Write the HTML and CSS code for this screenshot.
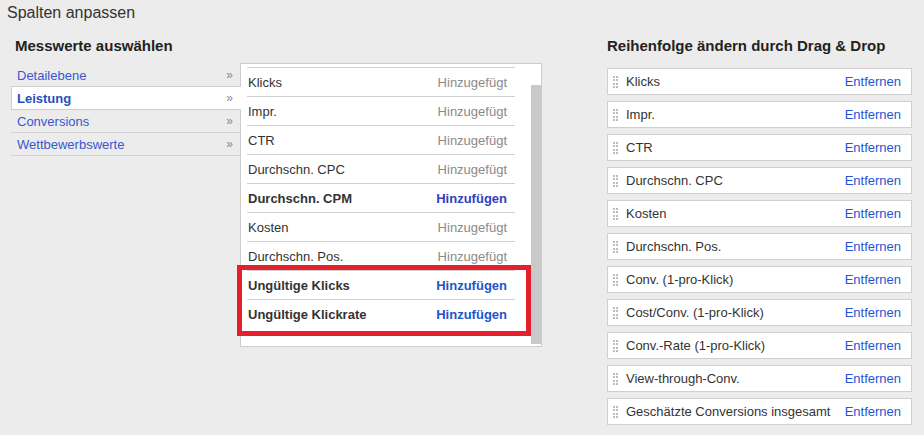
FILE: index.html
```html
<!DOCTYPE html>
<html lang="de">
<head>
<meta charset="utf-8">
<title>Spalten anpassen</title>
<link rel="stylesheet" href="styles.css">
</head>
<body>
<div class="page">
  <div class="title">Spalten anpassen</div>
  <div class="columns">
    <div class="left">
      <div class="heading left-heading">Messwerte auswählen</div>
      <div class="picker">
        <ul class="nav">
          <li class="nav-item"><span>Detailebene</span><span class="chev">»</span></li>
          <li class="nav-item active"><span>Leistung</span><span class="chev">»</span></li>
          <li class="nav-item"><span>Conversions</span><span class="chev">»</span></li>
          <li class="nav-item"><span>Wettbewerbswerte</span><span class="chev">»</span></li>
        </ul>
        <div class="panel">
          <ul class="metrics">
            <li class="metric"><span>Klicks</span><span class="added">Hinzugefügt</span></li>
            <li class="metric"><span>Impr.</span><span class="added">Hinzugefügt</span></li>
            <li class="metric"><span>CTR</span><span class="added">Hinzugefügt</span></li>
            <li class="metric"><span>Durchschn. CPC</span><span class="added">Hinzugefügt</span></li>
            <li class="metric strong"><span>Durchschn. CPM</span><span class="add add-visited">Hinzufügen</span></li>
            <li class="metric"><span>Kosten</span><span class="added">Hinzugefügt</span></li>
            <li class="metric"><span>Durchschn. Pos.</span><span class="added">Hinzugefügt</span></li>
            <li class="metric strong"><span>Ungültige Klicks</span><span class="add">Hinzufügen</span></li>
            <li class="metric strong"><span>Ungültige Klickrate</span><span class="add">Hinzufügen</span></li>
          </ul>
          <div class="scrollbar"></div>
          <div class="highlight"></div>
        </div>
      </div>
    </div>
    <div class="right">
      <div class="heading">Reihenfolge ändern durch Drag &amp; Drop</div>
      <ul class="order">
        <li class="order-item"><svg class="grip" width="5" height="12" viewBox="0 0 5 12"><g fill="#bdbdbd"><rect x="0" y="0" width="2" height="2"/><rect x="3" y="0" width="2" height="2"/><rect x="0" y="3" width="2" height="2"/><rect x="3" y="3" width="2" height="2"/><rect x="0" y="7" width="2" height="2"/><rect x="3" y="7" width="2" height="2"/><rect x="0" y="10" width="2" height="2"/><rect x="3" y="10" width="2" height="2"/></g></svg><span class="name">Klicks</span><span class="remove">Entfernen</span></li>
        <li class="order-item"><svg class="grip" width="5" height="12" viewBox="0 0 5 12"><g fill="#bdbdbd"><rect x="0" y="0" width="2" height="2"/><rect x="3" y="0" width="2" height="2"/><rect x="0" y="3" width="2" height="2"/><rect x="3" y="3" width="2" height="2"/><rect x="0" y="7" width="2" height="2"/><rect x="3" y="7" width="2" height="2"/><rect x="0" y="10" width="2" height="2"/><rect x="3" y="10" width="2" height="2"/></g></svg><span class="name">Impr.</span><span class="remove">Entfernen</span></li>
        <li class="order-item"><svg class="grip" width="5" height="12" viewBox="0 0 5 12"><g fill="#bdbdbd"><rect x="0" y="0" width="2" height="2"/><rect x="3" y="0" width="2" height="2"/><rect x="0" y="3" width="2" height="2"/><rect x="3" y="3" width="2" height="2"/><rect x="0" y="7" width="2" height="2"/><rect x="3" y="7" width="2" height="2"/><rect x="0" y="10" width="2" height="2"/><rect x="3" y="10" width="2" height="2"/></g></svg><span class="name">CTR</span><span class="remove">Entfernen</span></li>
        <li class="order-item"><svg class="grip" width="5" height="12" viewBox="0 0 5 12"><g fill="#bdbdbd"><rect x="0" y="0" width="2" height="2"/><rect x="3" y="0" width="2" height="2"/><rect x="0" y="3" width="2" height="2"/><rect x="3" y="3" width="2" height="2"/><rect x="0" y="7" width="2" height="2"/><rect x="3" y="7" width="2" height="2"/><rect x="0" y="10" width="2" height="2"/><rect x="3" y="10" width="2" height="2"/></g></svg><span class="name">Durchschn. CPC</span><span class="remove">Entfernen</span></li>
        <li class="order-item"><svg class="grip" width="5" height="12" viewBox="0 0 5 12"><g fill="#bdbdbd"><rect x="0" y="0" width="2" height="2"/><rect x="3" y="0" width="2" height="2"/><rect x="0" y="3" width="2" height="2"/><rect x="3" y="3" width="2" height="2"/><rect x="0" y="7" width="2" height="2"/><rect x="3" y="7" width="2" height="2"/><rect x="0" y="10" width="2" height="2"/><rect x="3" y="10" width="2" height="2"/></g></svg><span class="name">Kosten</span><span class="remove">Entfernen</span></li>
        <li class="order-item"><svg class="grip" width="5" height="12" viewBox="0 0 5 12"><g fill="#bdbdbd"><rect x="0" y="0" width="2" height="2"/><rect x="3" y="0" width="2" height="2"/><rect x="0" y="3" width="2" height="2"/><rect x="3" y="3" width="2" height="2"/><rect x="0" y="7" width="2" height="2"/><rect x="3" y="7" width="2" height="2"/><rect x="0" y="10" width="2" height="2"/><rect x="3" y="10" width="2" height="2"/></g></svg><span class="name">Durchschn. Pos.</span><span class="remove">Entfernen</span></li>
        <li class="order-item"><svg class="grip" width="5" height="12" viewBox="0 0 5 12"><g fill="#bdbdbd"><rect x="0" y="0" width="2" height="2"/><rect x="3" y="0" width="2" height="2"/><rect x="0" y="3" width="2" height="2"/><rect x="3" y="3" width="2" height="2"/><rect x="0" y="7" width="2" height="2"/><rect x="3" y="7" width="2" height="2"/><rect x="0" y="10" width="2" height="2"/><rect x="3" y="10" width="2" height="2"/></g></svg><span class="name">Conv. (1-pro-Klick)</span><span class="remove">Entfernen</span></li>
        <li class="order-item"><svg class="grip" width="5" height="12" viewBox="0 0 5 12"><g fill="#bdbdbd"><rect x="0" y="0" width="2" height="2"/><rect x="3" y="0" width="2" height="2"/><rect x="0" y="3" width="2" height="2"/><rect x="3" y="3" width="2" height="2"/><rect x="0" y="7" width="2" height="2"/><rect x="3" y="7" width="2" height="2"/><rect x="0" y="10" width="2" height="2"/><rect x="3" y="10" width="2" height="2"/></g></svg><span class="name">Cost/Conv. (1-pro-Klick)</span><span class="remove">Entfernen</span></li>
        <li class="order-item"><svg class="grip" width="5" height="12" viewBox="0 0 5 12"><g fill="#bdbdbd"><rect x="0" y="0" width="2" height="2"/><rect x="3" y="0" width="2" height="2"/><rect x="0" y="3" width="2" height="2"/><rect x="3" y="3" width="2" height="2"/><rect x="0" y="7" width="2" height="2"/><rect x="3" y="7" width="2" height="2"/><rect x="0" y="10" width="2" height="2"/><rect x="3" y="10" width="2" height="2"/></g></svg><span class="name">Conv.-Rate (1-pro-Klick)</span><span class="remove">Entfernen</span></li>
        <li class="order-item"><svg class="grip" width="5" height="12" viewBox="0 0 5 12"><g fill="#bdbdbd"><rect x="0" y="0" width="2" height="2"/><rect x="3" y="0" width="2" height="2"/><rect x="0" y="3" width="2" height="2"/><rect x="3" y="3" width="2" height="2"/><rect x="0" y="7" width="2" height="2"/><rect x="3" y="7" width="2" height="2"/><rect x="0" y="10" width="2" height="2"/><rect x="3" y="10" width="2" height="2"/></g></svg><span class="name">View-through-Conv.</span><span class="remove">Entfernen</span></li>
        <li class="order-item"><svg class="grip" width="5" height="12" viewBox="0 0 5 12"><g fill="#bdbdbd"><rect x="0" y="0" width="2" height="2"/><rect x="3" y="0" width="2" height="2"/><rect x="0" y="3" width="2" height="2"/><rect x="3" y="3" width="2" height="2"/><rect x="0" y="7" width="2" height="2"/><rect x="3" y="7" width="2" height="2"/><rect x="0" y="10" width="2" height="2"/><rect x="3" y="10" width="2" height="2"/></g></svg><span class="name">Geschätzte Conversions insgesamt</span><span class="remove">Entfernen</span></li>
      </ul>
    </div>
  </div>
</div>
</body>
</html>
```

FILE: styles.css
```css
* {
  box-sizing: border-box;
}

html, body {
  margin: 0;
  padding: 0;
  background: #ececec;
}

body {
  font-family: "Liberation Sans", Arial, sans-serif;
  font-size: 13px;
  color: #333;
}

ul {
  list-style: none;
  margin: 0;
  padding: 0;
}

.page {
  padding: 4px 0 0 7px;
}

.title {
  font-size: 16px;
  line-height: 18px;
  color: #333;
}

.columns {
  display: flex;
  margin-top: 15px;
}

.left {
  width: 531px;
  margin-left: 4px;
}

.heading {
  font-size: 15px;
  font-weight: bold;
  line-height: 18px;
  color: #222;
}

.left-heading {
  padding-left: 4px;
}

.picker {
  display: flex;
  margin-top: 8px;
}

.nav {
  width: 229px;
  padding-top: 1px;
}

.nav-item {
  display: flex;
  justify-content: space-between;
  align-items: center;
  height: 23px;
  padding: 0 7px 0 6px;
  border-bottom: 1px solid #d2d2d2;
  color: #3a56d0;
}

.nav-item.active {
  position: relative;
  z-index: 1;
  margin-top: -1px;
  height: 24px;
  margin-right: -1px;
  background: #fff;
  border: 1px solid #cfcfcf;
  border-right: none;
  padding-left: 5px;
  padding-right: 8px;
  font-weight: bold;
  color: #1f4fc4;
}

.chev {
  color: #888;
  font-weight: normal;
  font-size: 12px;
}

.panel {
  position: relative;
  display: flex;
  width: 302px;
  background: #fff;
  border: 1px solid #cdcdcd;
}

.metrics {
  width: 268px;
  margin: 3px 0 18px 6px;
}

.metric {
  display: flex;
  justify-content: space-between;
  align-items: center;
  height: 29px;
  padding: 0 8px 0 1px;
  border-top: 1px solid #d0d0d0;
  color: #333;
}

.metric.strong {
  font-weight: bold;
}

.added {
  color: #8a8a8a;
}

.add {
  color: #1d55cc;
  font-weight: bold;
}

.add-visited {
  color: #3341c2;
}

.scrollbar {
  width: 10px;
  margin: 21px 0 2px 16px;
  background: #c9c9c9;
}

.highlight {
  position: absolute;
  left: -4px;
  top: 201px;
  width: 294px;
  height: 71px;
  border: 5px solid #e3202b;
}

.right {
  margin-left: 65px;
  width: 305px;
}

.order {
  margin-top: 13px;
  display: flex;
  flex-direction: column;
  gap: 6px;
}

.order-item {
  display: flex;
  align-items: center;
  height: 27px;
  background: #fff;
  border: 1px solid #cfcfcf;
  padding: 0 10px 0 5px;
}

.grip {
  flex: none;
  margin-right: 8px;
}

.name {
  flex: 1;
  color: #333;
}

.remove {
  color: #2356d2;
}
```
